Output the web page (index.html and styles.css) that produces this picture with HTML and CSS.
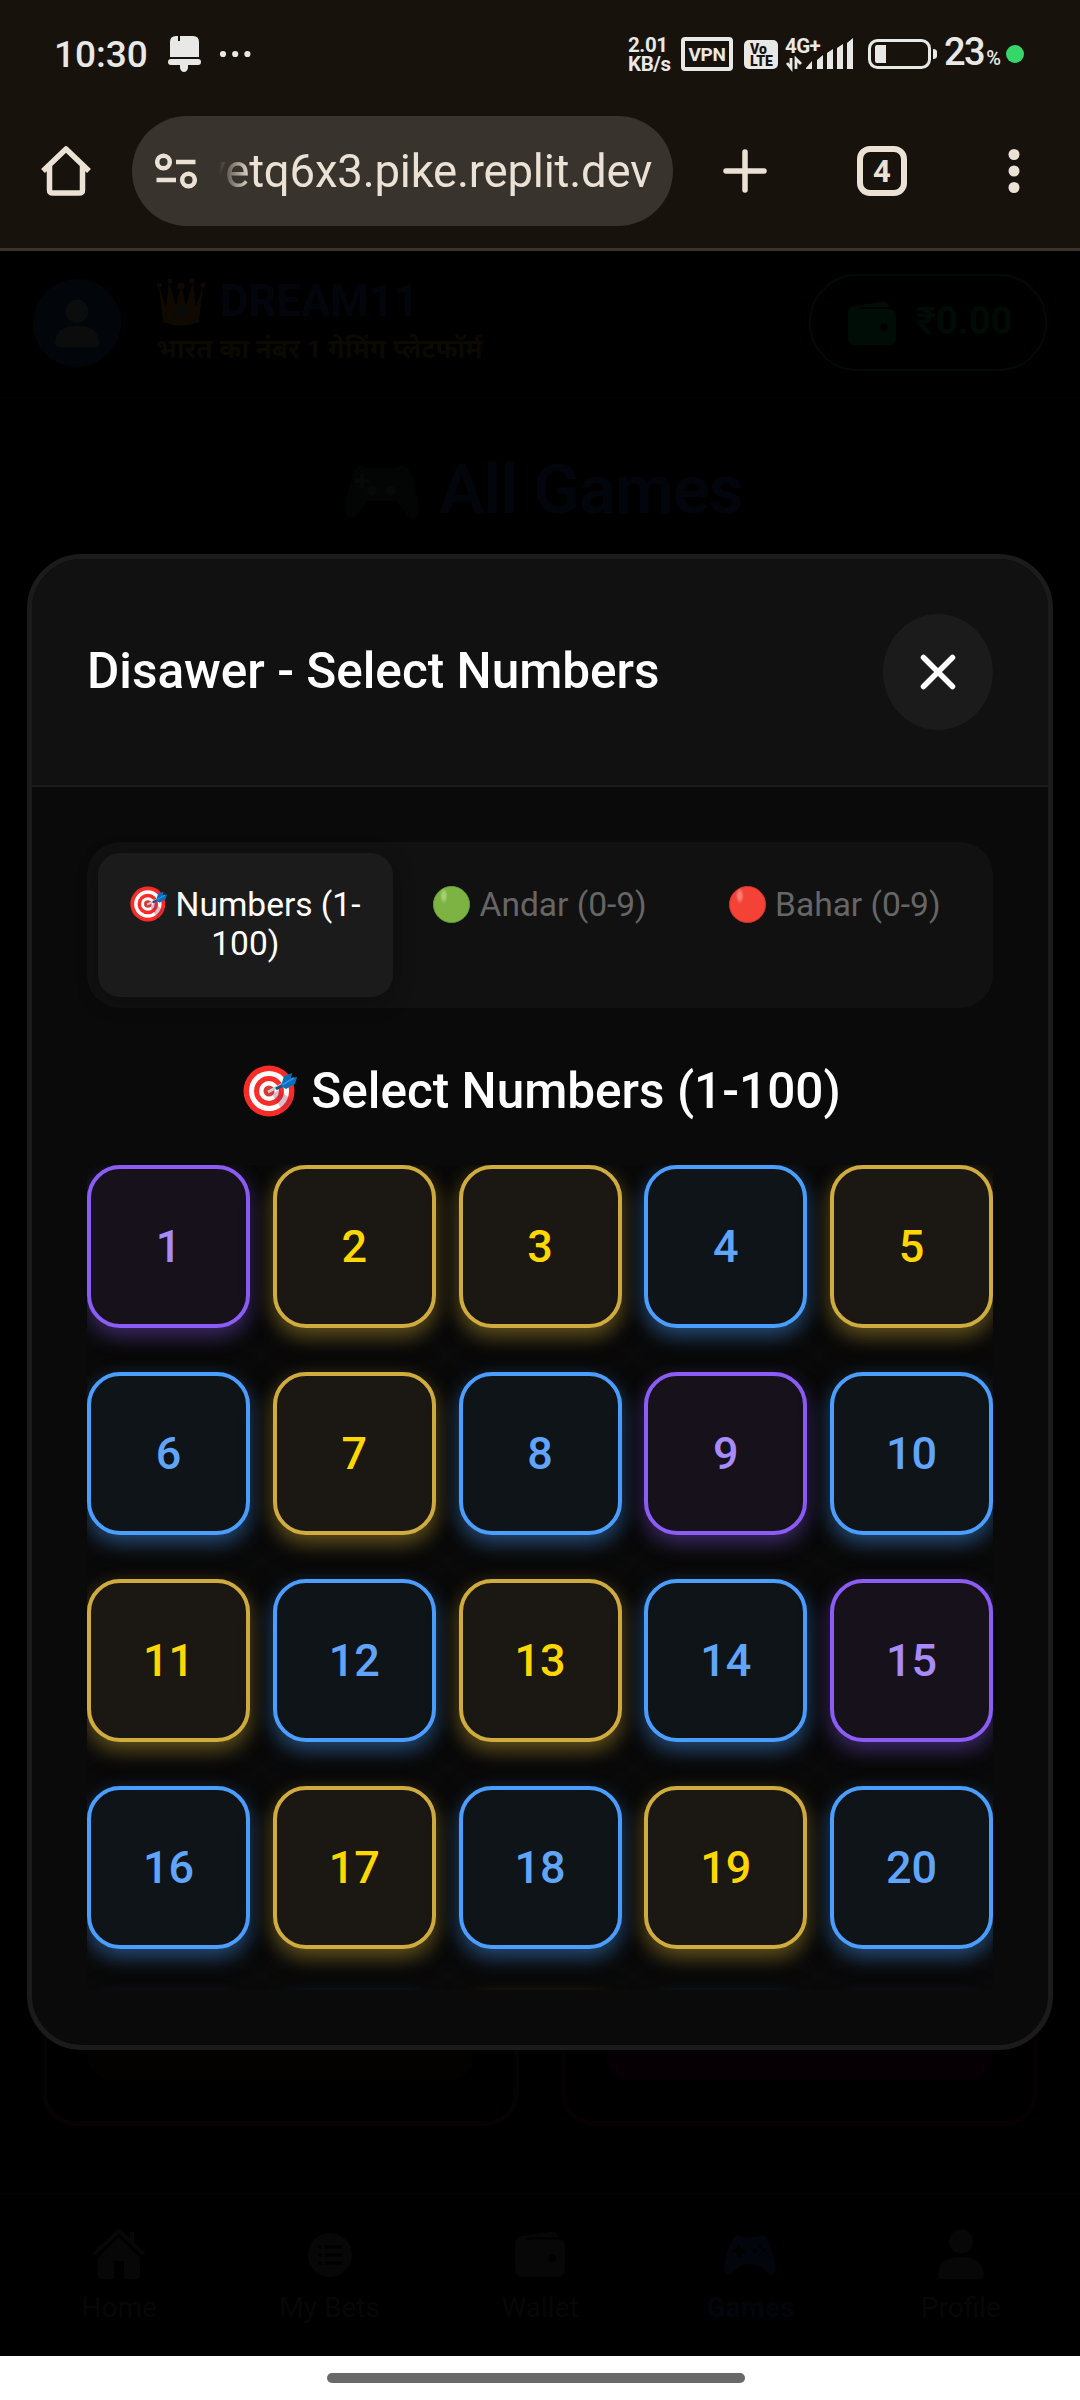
FILE: index.html
```html
<!DOCTYPE html>
<html lang="en">
<head>
<meta charset="utf-8">
<title>Disawer - Select Numbers</title>
<link rel="stylesheet" href="styles.css">
</head>
<body>
<svg class="defs" aria-hidden="true">
  <symbol id="target" viewBox="0 0 54 52">
    <circle cx="26" cy="26" r="25.5" fill="#fb2c27"/>
    <circle cx="26" cy="26" r="20" fill="#fff"/>
    <circle cx="26" cy="26" r="15" fill="#fb2c27"/>
    <circle cx="26" cy="26" r="10" fill="#fff"/>
    <circle cx="26" cy="26" r="5.5" fill="#d83a35"/>
    <path d="M29 29L40 46L49 35L36 25z" fill="#8e2350" opacity=".3"/>
    <path d="M25 27L40 19" stroke="#c6cdd2" stroke-width="3"/>
    <path d="M33 24L40 20" stroke="#12518c" stroke-width="3"/>
    <path d="M38 21L41 11L49 8L48 13L54 12L52 19L43 24z" fill="#0b6cb8"/>
    <path d="M39 20L51 13" stroke="#2493ef" stroke-width="2"/>
  </symbol>
  <symbol id="wallet" viewBox="0 0 50 44">
    <path d="M1 12Q1 6 7 5L37 .5Q40 0 41 3L43 6H15Q12 6 12 8H42Q49 8 49 15V37Q49 44 42 44H8Q1 44 1 37z"/>
    <circle class="hole" cx="37" cy="26" r="3.7"/>
  </symbol>
  <symbol id="person" viewBox="0 0 46 50">
    <circle cx="23" cy="12.5" r="12"/>
    <path d="M0 46Q1 28 23 28T46 46Q46 50 42 50H4Q0 50 0 46z"/>
  </symbol>
</svg>

<header class="status">
  <span class="clock">10:30</span>
  <svg class="bell" viewBox="0 0 33 36"><path d="M2 21V6Q2 0 8 0H10V5H12V0H25Q31 0 31 6V21zM3 23H30Q33 23 33 26T30 29H20V32Q19 36 16 36T12 32V29H3Q0 29 0 26T3 23z"/></svg>
  <svg class="more" viewBox="0 0 32 8"><circle cx="4" cy="4" r="3.1"/><circle cx="16.2" cy="4" r="3.1"/><circle cx="28.4" cy="4" r="3.1"/></svg>
  <span class="rate"><b>2.01</b><b>KB/s</b></span>
  <span class="vpn">VPN</span>
  <span class="volte"><b>Vo</b><b>LTE</b></span>
  <span class="signal">
    <b>4G+</b>
    <svg viewBox="0 0 70 35"><path d="M21 31L27 24V32H21zM32 23L38 18V32H32zM42 16L48 12V32H42zM52 11L58 7V32H52zM62 6L68 1V32H62z"/><path d="M6 21V31L2 26M11 32V22L16 27" stroke-width="2.8"/></svg>
  </span>
  <svg class="battery" viewBox="0 0 70 30"><rect x="1.5" y="1.5" width="60" height="27" rx="8"/><path d="M9 6H18V24H9Q7 24 7 22V8Q7 6 9 6zM65 10Q69 10 69 13V17Q69 20 65 20z"/></svg>
  <span class="charge">23<small>%</small></span>
  <i class="live"></i>
</header>

<nav class="browser">
  <svg class="home" viewBox="0 0 50 50"><path d="M2 25L25 3L48 25M8.500 20V44Q8.500 47 12 47H38Q41.500 47 41.500 44V20"/></svg>
  <div class="address">
    <svg viewBox="0 0 42 36"><circle cx="8.500" cy="9" r="6.300"/><path d="M21 9H40.500M1.500 27H21"/><circle cx="33.500" cy="27" r="6.300"/></svg>
    <span class="url">vetq6x3.pike.replit.dev</span>
  </div>
  <svg class="plus" viewBox="0 0 44 44"><path d="M22 3V41M3 22H41"/></svg>
  <span class="tabcount">4</span>
  <svg class="kebab" viewBox="0 0 12 44"><circle cx="6" cy="5.500" r="5.500"/><circle cx="6" cy="22" r="5.500"/><circle cx="6" cy="38.500" r="5.500"/></svg>
</nav>

<div class="page">
  <div class="topbar">
    <div class="avatar"><svg><use href="#person"/></svg></div>
    <div class="brand">
      <div class="name">
        <svg viewBox="0 0 50 48"><path d="M3 8L10 29L13 4L20 27L25 9L30 27L37 4L40 29L47 8L43 44Q25 51 7 44z"/><circle cx="3" cy="7" r="2.500"/><circle cx="14" cy="3" r="2.500"/><circle cx="25" cy="8" r="3.500"/><circle cx="36" cy="3" r="2.500"/><circle cx="47" cy="7" r="2.500"/><circle class="gem" cx="25" cy="33" r="4"/></svg>
        <span>DREAM11</span>
      </div>
      <div class="tagline">भारत का नंबर 1 गेमिंग प्लेटफॉर्म</div>
    </div>
    <div class="balance"><svg><use href="#wallet"/></svg><span>₹0.00</span></div>
  </div>
  <h1 class="games-title">
    <svg viewBox="0 0 74 54"><path d="M12 3Q17 -2 23 3H51Q57 -2 62 3Q69 9 74 46Q71 57 62 50L51 36H23L12 50Q3 57 0 46Q5 9 12 3z"/><circle class="stick" cx="27" cy="26" r="5"/><circle class="stick" cx="46" cy="26" r="5"/><path class="stick" d="M15 9H19V14H24V18H19V23H15V18H10V14H15z"/></svg>
    <span>All Games</span>
  </h1>
  <div class="cards">
    <div class="card warm"><div></div></div>
    <div class="card rose"><div></div></div>
  </div>
  <div class="bottomnav">
    <div><svg viewBox="0 0 52 50"><path d="M26 8L47 29V46Q47 50 43 50H31V32H21V50H9Q5 50 5 46V29z"/><path d="M1 25L26 2L51 25M39 3V14" class="line"/></svg><span>Home</span></div>
    <div><svg viewBox="0 0 52 50"><circle cx="26" cy="26" r="22"/><path class="cut" d="M14 18H18M21 18H38M14 26H18M21 26H38M14 34H18M21 34H38"/></svg><span>My Bets</span></div>
    <div><svg><use href="#wallet"/></svg><span>Wallet</span></div>
    <div class="on"><svg viewBox="0 0 52 50"><path d="M10 8Q14 4 20 8H32Q38 4 42 8Q50 20 52 42Q48 50 43 43Q35 35 26 35T9 43Q4 50 0 42Q2 20 10 8z"/><path class="cut" d="M9 22H21M15 16V28M29 22H33M38 22H42M35 17H37M35 27H37"/></svg><span>Games</span></div>
    <div><svg><use href="#person"/></svg><span>Profile</span></div>
  </div>
</div>

<section class="dialog">
  <div class="dialog-head">
    <h2>Disawer - Select Numbers</h2>
    <button class="close"><svg viewBox="0 0 36 36"><path d="M3.500 3.500L32.500 32.500M32.500 3.500L3.500 32.500"/></svg></button>
  </div>
  <div class="dialog-body">
    <div class="tabs">
      <div class="tab active"><svg class="dart"><use href="#target"/></svg> Numbers (1-<br>100)</div>
      <div class="tab"><i class="ball green"></i> Andar (0-9)</div>
      <div class="tab"><i class="ball red"></i> Bahar (0-9)</div>
    </div>
    <h3><svg><use href="#target"/></svg><span>Select Numbers (1-100)</span></h3>
    <div class="numbers">
      <div class="num p">1</div><div class="num g">2</div><div class="num g">3</div><div class="num b">4</div><div class="num g">5</div>
      <div class="num b">6</div><div class="num g">7</div><div class="num b">8</div><div class="num p">9</div><div class="num b">10</div>
      <div class="num g">11</div><div class="num b">12</div><div class="num g">13</div><div class="num b">14</div><div class="num p">15</div>
      <div class="num b">16</div><div class="num g">17</div><div class="num b">18</div><div class="num g">19</div><div class="num b">20</div>
      <div class="num p"></div><div class="num b"></div><div class="num g"></div><div class="num b"></div><div class="num p"></div>
    </div>
  </div>
</section>

<footer class="gesture"><i></i></footer>
</body>
</html>
```
FILE: styles.css
```css
* { box-sizing: border-box; }
body {
  margin: 0;
  width: 1080px;
  height: 2400px;
  display: flex;
  flex-direction: column;
  position: relative;
  overflow: hidden;
  background: #000;
  color: #fff;
  font-family: Roboto, "Noto Sans", sans-serif;
}
.defs { position: absolute; width: 0; height: 0; }
svg { display: block; flex: none; }

/* system status bar */
.status {
  height: 108px;
  display: flex;
  align-items: center;
  background: #17130c;
  color: #e8e8e6;
  fill: #e8e8e6;
  padding-left: 54px;
}
.clock { width: 114px; font-size: 37px; font-weight: 500; line-height: 40px; padding-top: 1px; }
.bell { width: 33px; height: 36px; margin-right: 18px; }
.more { width: 32px; height: 8px; }
.rate { width: 53px; margin-left: 377px; font-size: 20.500px; line-height: 19px; padding-top: 1px; }
.rate b, .volte b { display: block; }
.rate b { white-space: nowrap; letter-spacing: -.4px; }
.vpn {
  width: 52px; height: 34px; border: 4px solid #e8e8e6; border-radius: 4px;
  font-size: 19px; line-height: 27px; font-weight: 700; text-align: center; letter-spacing: -.3px;
}
.volte {
  width: 34px; height: 29px; margin-left: 11px; border-radius: 5px;
  background: #e8e8e6; color: #17130c; font-size: 14px; line-height: 12px; font-weight: 900;
  padding: 3px 0 0 6px;
}
.signal { width: 70px; height: 34px; margin-left: 7px; position: relative; }
.signal b { position: absolute; left: 0; top: 0; font-size: 20.500px; line-height: 18px; letter-spacing: -.6px; }
.signal svg { width: 70px; height: 35px; stroke: #e8e8e6; stroke-width: 0; }
.signal svg path + path { fill: none; }
.battery { width: 70px; height: 30px; margin-left: 13px; }
.battery rect { fill: none; stroke: #e8e8e6; stroke-width: 3; }
.charge { width: 62px; margin-left: 6px; font-size: 38px; font-weight: 500; line-height: 40px; padding-top: 2px; white-space: nowrap; letter-spacing: -1.500px; display: flex; align-items: baseline; }
.charge small { font-size: 20px; margin-left: 2px; }
.live { width: 18px; height: 18px; border-radius: 50%; background: #36d669; }

/* browser toolbar */
.browser {
  height: 143px;
  display: flex;
  align-items: center;
  padding: 0 60px 14px 41px;
  background: #17130c;
  border-bottom: 3px solid #38342c;
  color: #ebe1d5;
  fill: #ebe1d5;
}
.home, .plus, .address svg { fill: none; stroke: #ebe1d5; stroke-width: 5.500; }
.home { width: 50px; height: 50px; stroke-linejoin: round; }
.address {
  width: 541px; height: 110px; margin-left: 41px; padding-left: 23px;
  border-radius: 55px; background: #38332c;
  display: flex; align-items: center;
}
.address svg { width: 42px; height: 36px; stroke-width: 4.500; }
.url {
  width: 433px; height: 62px; margin-left: 22px;
  display: flex; justify-content: flex-end;
  overflow: hidden; white-space: nowrap;
  font-size: 45.500px; line-height: 64px; letter-spacing: -.2px;
  mask-image: linear-gradient(90deg, transparent, #000 32px);
}
.plus { width: 44px; height: 44px; margin-left: 50px; stroke-linecap: round; }
.tabcount {
  width: 50px; height: 50px; margin-left: 90px; border: 6px solid #ebe1d5; border-radius: 13px;
  font-size: 31px; line-height: 39px; font-weight: 700; text-align: center;
}
.kebab { width: 12px; height: 44px; margin-left: 101px; }

/* dimmed page behind the dialog */
.page { height: 2105px; display: flex; flex-direction: column; background: #000; }
.topbar { height: 147px; display: flex; padding: 0 33px; border-bottom: 1px solid #030303; }
.avatar { width: 88px; height: 88px; margin-top: 28px; border-radius: 50%; background: #02060b; padding: 20px 22px; }
.avatar svg { width: 44px; height: 48px; fill: #0c0c0c; }
.brand { margin: 27px 0 0 35px; width: 500px; }
.name { display: flex; height: 48px; }
.name svg { width: 50px; height: 48px; fill: #0f0902; }
.name .gem { fill: #020d10; }
.name span { margin-left: 14px; font-size: 44px; font-weight: 700; line-height: 47px; color: #02060c; letter-spacing: -.2px; }
.tagline { margin-top: 2px; font-size: 26.500px; line-height: 42px; font-weight: 700; color: #0c0900; white-space: nowrap; font-family: Roboto, "Noto Sans Devanagari", "Noto Sans", sans-serif; }
.balance {
  width: 238px; height: 97px; margin: 23px 0 0 auto; padding-left: 36px;
  border: 2px solid #010b07; border-radius: 49px;
  display: flex; align-items: center; color: #000b06; font-size: 38px; font-weight: 700;
}
.balance svg { width: 50px; height: 44px; fill: #000c06; margin-right: 19px; }
.balance span { margin-top: -3px; }
.hole { fill: #000; }
.games-title { margin: 67px 0 0; height: 54px; display: flex; padding-left: 345px; font-size: 68px; font-weight: 600; line-height: 50px; letter-spacing: -.8px; color: #02050b; }
.games-title svg { width: 74px; height: 54px; fill: #030505; }
.games-title .stick { fill: #080808; }
.games-title span { margin-left: 20px; white-space: nowrap; }
.cards { margin-top: 1473px; height: 134px; display: flex; justify-content: space-between; padding: 0 42px; }
.card { width: 477px; height: 134px; border: 5px solid #080303; border-top: 0; border-radius: 0 0 33px 33px; padding: 0 41px; }
.card div { height: 88px; border-radius: 0 0 22px 22px; background: #040200; }
.card.rose { border-color: #080104; }
.card.rose div { background: linear-gradient(#020006, #060004 70%); }
.bottomnav { height: 163px; margin-top: 67px; border-top: 1px solid #030303; display: flex; padding: 35px 14px 0; fill: #070707; color: #070707; }
.bottomnav div { flex: 1; display: flex; flex-direction: column; align-items: center; font-size: 28px; line-height: 34px; }
.bottomnav svg { width: 52px; height: 50px; margin-bottom: 12px; }
.bottomnav .line { fill: none; stroke: #070707; stroke-width: 4; }
.bottomnav .cut { fill: none; stroke: #000; stroke-width: 3; }
.bottomnav .on { color: #02050b; fill: #02050b; font-weight: 700; }

/* number picker */
.dialog {
  position: absolute; left: 27px; top: 554px; width: 1026px; height: 1496px;
  border: 5px solid #1b1b1b; border-radius: 55px; background: #0a0a0a; overflow: hidden;
}
.dialog-head {
  height: 228px; display: flex; align-items: center; justify-content: space-between;
  padding: 0 55px; background: #111; border-bottom: 2px solid #1c1c1c;
}
h2, h3 { margin: 0; font-size: 49.500px; font-weight: 500; white-space: nowrap; }
h2 { line-height: 58px; padding-bottom: 3px; }
.close { width: 110px; height: 116px; border: 0; padding: 0; border-radius: 50%; background: #1b1b1b; display: flex; align-items: center; justify-content: center; }
.close svg { width: 36px; height: 36px; stroke: #fff; stroke-width: 5.500; stroke-linecap: round; }
.dialog-body { padding: 55px 55px 0; }
.tabs { height: 166px; display: flex; padding: 11px; border-radius: 33px; background: #111; }
.tab { flex: 1; padding-top: 31.500px; border-radius: 22px; font-size: 33.500px; line-height: 39px; color: #666; text-align: center; white-space: nowrap; }
.tab.active { background: #1b1b1b; color: #fff; box-shadow: 0 5px 22px rgba(0, 0, 0, .3); }
.dart { display: inline-block; width: 37px; height: 36px; vertical-align: -6px; }
.ball { display: inline-block; width: 37px; height: 37px; margin-right: 1px; border-radius: 50%; vertical-align: -7px; }
.ball.green { background: radial-gradient(ellipse 4px 8px at 28% 25%, #a5d071 40%, transparent), #7cb342; border: 1px solid #689f38; }
.ball.red { background: radial-gradient(ellipse 4px 8px at 28% 25%, #ff8075 40%, transparent), #f44336; border: 1px solid #d5342b; }
h3 { margin-top: 55px; height: 58px; line-height: 56px; display: flex; justify-content: center; padding-left: 4px; }
h3 svg { width: 54px; height: 52px; margin: 2px 14px 0 0; }
.numbers {
  height: 825px; margin-top: 44px; overflow: hidden;
  display: grid; grid-template-columns: repeat(5, 163px); grid-auto-rows: 163px;
  justify-content: space-between; row-gap: 44px;
}
.num {
  border: 4px solid; border-radius: 33px;
  display: flex; align-items: center; justify-content: center;
  font-size: 45px; font-weight: 500;
}
.p { color: #a78bfa; background: #17111b; border-color: #8b5cf6; box-shadow: 0 8px 20px rgba(139, 92, 246, .4), 0 5px 33px rgba(0, 0, 0, .3); }
.g { color: #ffd700; background: #1b1712; border-color: #d0ac3f; box-shadow: 0 8px 20px rgba(212, 175, 55, .45), 0 5px 33px rgba(0, 0, 0, .3); }
.b { color: #60a5fa; background: #0f1418; border-color: #4a9eff; box-shadow: 0 8px 20px rgba(74, 158, 255, .45), 0 5px 33px rgba(0, 0, 0, .3); }

/* gesture bar */
.gesture { height: 44px; background: #fff; display: flex; justify-content: center; align-items: center; padding: 0 8px 0 0; }
.gesture i { width: 418px; height: 10px; border-radius: 5px; background: #696969; }
```
